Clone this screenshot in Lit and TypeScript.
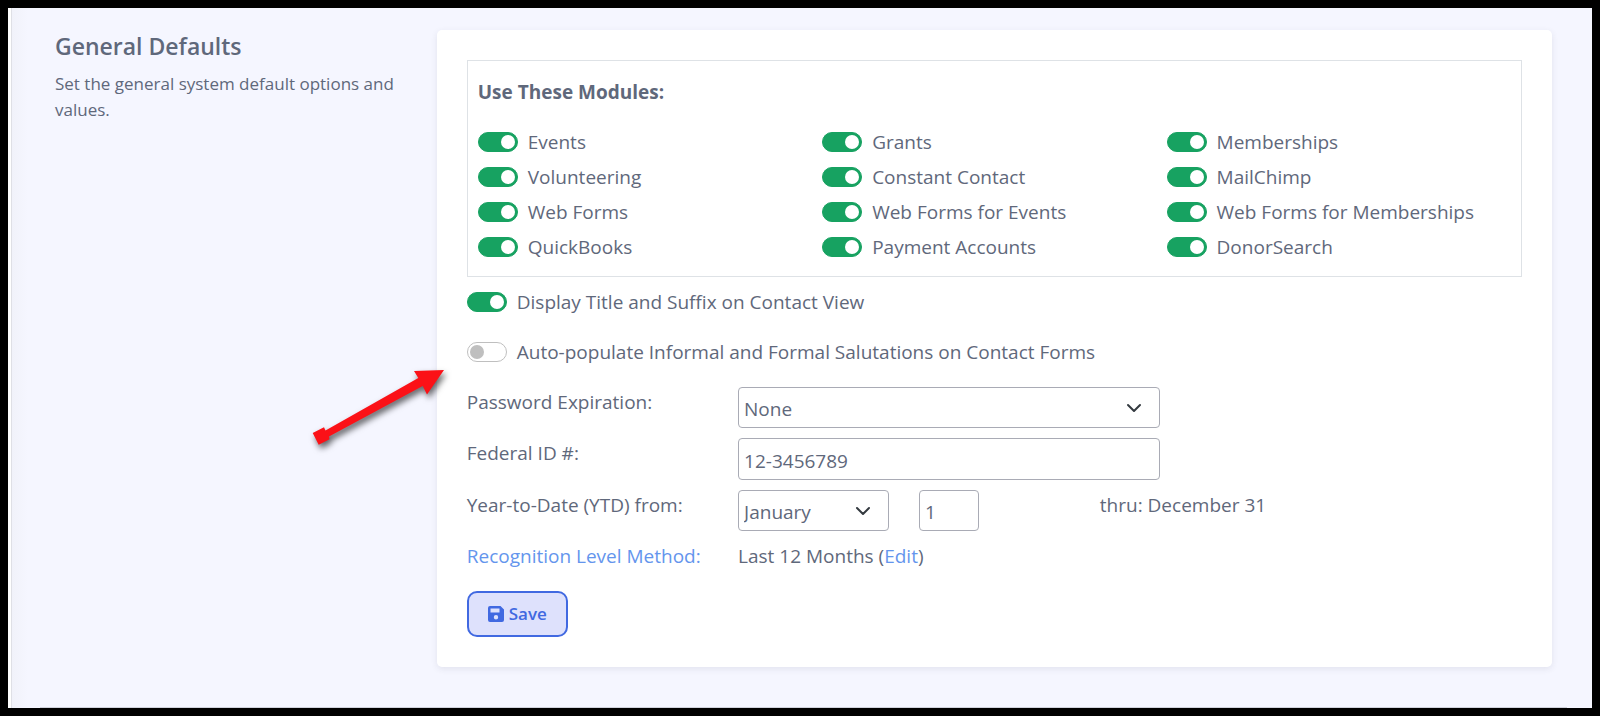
import { LitElement, html, css, svg } from "lit";
import { customElement, property, state } from "lit/decorators.js";

const chevron = html`<svg class="chevron" viewBox="0 0 16 16" aria-hidden="true">
  ${svg`<path d="M2 5l6 6 6-6" fill="none" stroke="#343a40" stroke-width="2" stroke-linecap="round" stroke-linejoin="round"/>`}
</svg>`;

@customElement("toggle-switch")
export class ToggleSwitch extends LitElement {
  @property() label = "";
  @property({ type: Boolean }) on = false;

  static styles = css`
    :host {
      display: block;
    }
    .switch {
      display: flex;
      align-items: center;
      gap: 10px;
      line-height: 25px;
    }
    .text {
      padding-top: 2px;
    }
    .box {
      appearance: none;
      box-sizing: border-box;
      flex: none;
      display: flex;
      align-items: center;
      width: 40px;
      height: 20px;
      margin: 0;
      padding: 0 2px;
      border: 1px solid #bfbfbf;
      border-radius: 10px;
      background: #fff;
    }
    .box::before {
      content: "";
      width: 14px;
      height: 14px;
      border-radius: 50%;
      background: #bfbfbf;
    }
    .box:checked {
      justify-content: flex-end;
      border-color: #17a261;
      background: #17a261;
    }
    .box:checked::before {
      background: #fff;
    }
  `;

  render() {
    return html`<label class="switch">
      <input
        class="box"
        type="checkbox"
        .checked=${this.on}
        @change=${(e: Event) => (this.on = (e.target as HTMLInputElement).checked)}
      />
      <span class="text">${this.label}</span>
    </label>`;
  }
}

@customElement("app-root")
export class AppRoot extends LitElement {
  @state() private modules = [
    "Events",
    "Grants",
    "Memberships",
    "Volunteering",
    "Constant Contact",
    "MailChimp",
    "Web Forms",
    "Web Forms for Events",
    "Web Forms for Memberships",
    "QuickBooks",
    "Payment Accounts",
    "DonorSearch",
  ];

  static styles = css`
    :host {
      display: block;
      color: #5f687b;
      font-family: "Open Sans", "Noto Sans", sans-serif;
      font-size: 19px;
      line-height: 30px;
    }
    .frame {
      box-sizing: border-box;
      display: flex;
      min-height: 100vh;
      border: 8px solid #000;
      padding-left: 3px;
      background: #fff;
    }
    .page {
      flex: 1;
      display: flex;
      flex-direction: column;
      padding: 0 25px 0 28px;
      border-left: 1px solid #dfe0e6;
      background: linear-gradient(90deg, #f1f2fa, #f5f6ff 16px);
    }
    .section {
      flex: 1;
      display: grid;
      grid-template-columns: repeat(12, minmax(0, 1fr));
      gap: 30px;
      align-items: start;
      padding: 22px 15px 40px;
      border-bottom: 1px solid #d0d2dc;
    }
    .intro {
      grid-column: span 3;
    }
    .title {
      margin: 0 0 9px;
      font-size: 23px;
      font-weight: 600;
      line-height: 32px;
    }
    .lead {
      margin: 0;
      font-size: 17px;
      line-height: 26px;
    }
    .card {
      grid-column: span 9;
      position: relative;
      padding: 30px;
      border-radius: 5px;
      background: #fff;
      box-shadow: 0 2px 6px rgba(60, 60, 90, 0.1);
    }
    .modules {
      margin: 0 0 11px;
      padding: 16px 10px;
      border: 1px solid #dee2e6;
    }
    .modules-title {
      margin: 0 0 21px;
      font-size: 19px;
      font-weight: 700;
      line-height: 30px;
    }
    .module-grid {
      display: grid;
      grid-template-columns: repeat(3, minmax(0, 1fr));
      row-gap: 8px;
    }
    .options {
      display: grid;
      gap: 23px;
      margin-bottom: 22px;
    }
    .form {
      display: grid;
      gap: 10px;
    }
    .row {
      display: grid;
      grid-template-columns: repeat(12, minmax(0, 1fr));
      column-gap: 30px;
    }
    .name {
      grid-column: span 3;
      white-space: nowrap;
    }
    .wide {
      grid-column: span 5;
    }
    .medium {
      grid-column: span 2;
    }
    .small {
      grid-column: span 1;
    }
    .thru {
      grid-column: 8 / span 5;
    }
    .value {
      grid-column: span 9;
    }
    .field {
      display: grid;
      align-items: center;
    }
    .field > * {
      grid-area: 1 / 1;
    }
    .chevron {
      width: 16px;
      height: 16px;
      margin-right: 18px;
      justify-self: end;
      pointer-events: none;
    }
    .control {
      appearance: none;
      box-sizing: border-box;
      width: 100%;
      height: 41px;
      margin: 0;
      padding: 3px 5px 0;
      border: 1px solid #a9abb5;
      border-radius: 4px;
      background: #fff;
      color: inherit;
      font: inherit;
      outline: none;
    }
    .control.tall {
      height: 42px;
    }
    .link {
      color: #6495ed;
      text-decoration: none;
    }
    .save {
      display: flex;
      align-items: center;
      gap: 5px;
      height: 46px;
      margin: 20px 0 0;
      padding: 0 19px;
      border: 2px solid #4169e1;
      border-radius: 10px;
      background: #dee1fc;
      color: #4169e1;
      font: inherit;
      font-size: 17px;
      font-weight: 600;
    }
    .disk {
      width: 16px;
      height: 16px;
    }
    .arrow {
      position: absolute;
      left: -137px;
      top: 330px;
      width: 150px;
      height: 100px;
      filter: drop-shadow(2px 4px 3px rgba(0, 0, 0, 0.6));
      pointer-events: none;
    }
  `;

  render() {
    return html`<div class="frame">
      <main class="page">
        <section class="section">
          <div class="intro">
            <h2 class="title">General Defaults</h2>
            <p class="lead">Set the general system default options and values.</p>
          </div>
          <form class="card" @submit=${(e: Event) => e.preventDefault()}>
            <div class="modules">
              <h3 class="modules-title">Use These Modules:</h3>
              <div class="module-grid">
                ${this.modules.map((m) => html`<toggle-switch label=${m} on></toggle-switch>`)}
              </div>
            </div>
            <div class="options">
              <toggle-switch label="Display Title and Suffix on Contact View" on></toggle-switch>
              <toggle-switch
                label="Auto-populate Informal and Formal Salutations on Contact Forms"
              ></toggle-switch>
            </div>
            <div class="form">
              <div class="row">
                <label class="name" for="expiration">Password Expiration:</label>
                <div class="field wide">
                  <select class="control" id="expiration">
                    <option>None</option>
                  </select>
                  ${chevron}
                </div>
              </div>
              <div class="row">
                <label class="name" for="federal">Federal ID #:</label>
                <div class="field wide">
                  <input class="control tall" id="federal" type="text" value="12-3456789" />
                </div>
              </div>
              <div class="row">
                <label class="name" for="month">Year-to-Date (YTD) from:</label>
                <div class="field medium">
                  <select class="control" id="month">
                    <option>January</option>
                  </select>
                  ${chevron}
                </div>
                <div class="field small">
                  <input class="control" type="text" value="1" aria-label="Day" />
                </div>
                <span class="thru">thru: December 31</span>
              </div>
              <div class="row">
                <a class="name link" href="#">Recognition Level Method:</a>
                <span class="value">Last 12 Months (<a class="link" href="#">Edit</a>)</span>
              </div>
            </div>
            <button class="save" type="submit">
              <svg class="disk" viewBox="0 0 16 16" aria-hidden="true">
                <path
                  fill="currentColor"
                  fill-rule="evenodd"
                  d="M2 0h10.500L16 3.500V14a2 2 0 0 1-2 2H2a2 2 0 0 1-2-2V2a2 2 0 0 1 2-2zM2.500 2.500v4h9v-4zM8 9a2.200 2.200 0 1 0 0 4.400A2.200 2.200 0 0 0 8 9z"
                />
              </svg>
              <span>Save</span>
            </button>
            <svg class="arrow" viewBox="300 360 150 100" aria-hidden="true">
              <path
                fill="#fb1117"
                d="M444 370L427 394.500L422.700 386L329 436.500L329.500 439.300L318.700 444.700L312.700 433L324 427.300L325.500 430.500L418.300 378L414 371z"
              />
            </svg>
          </form>
        </section>
      </main>
    </div>`;
  }
}
